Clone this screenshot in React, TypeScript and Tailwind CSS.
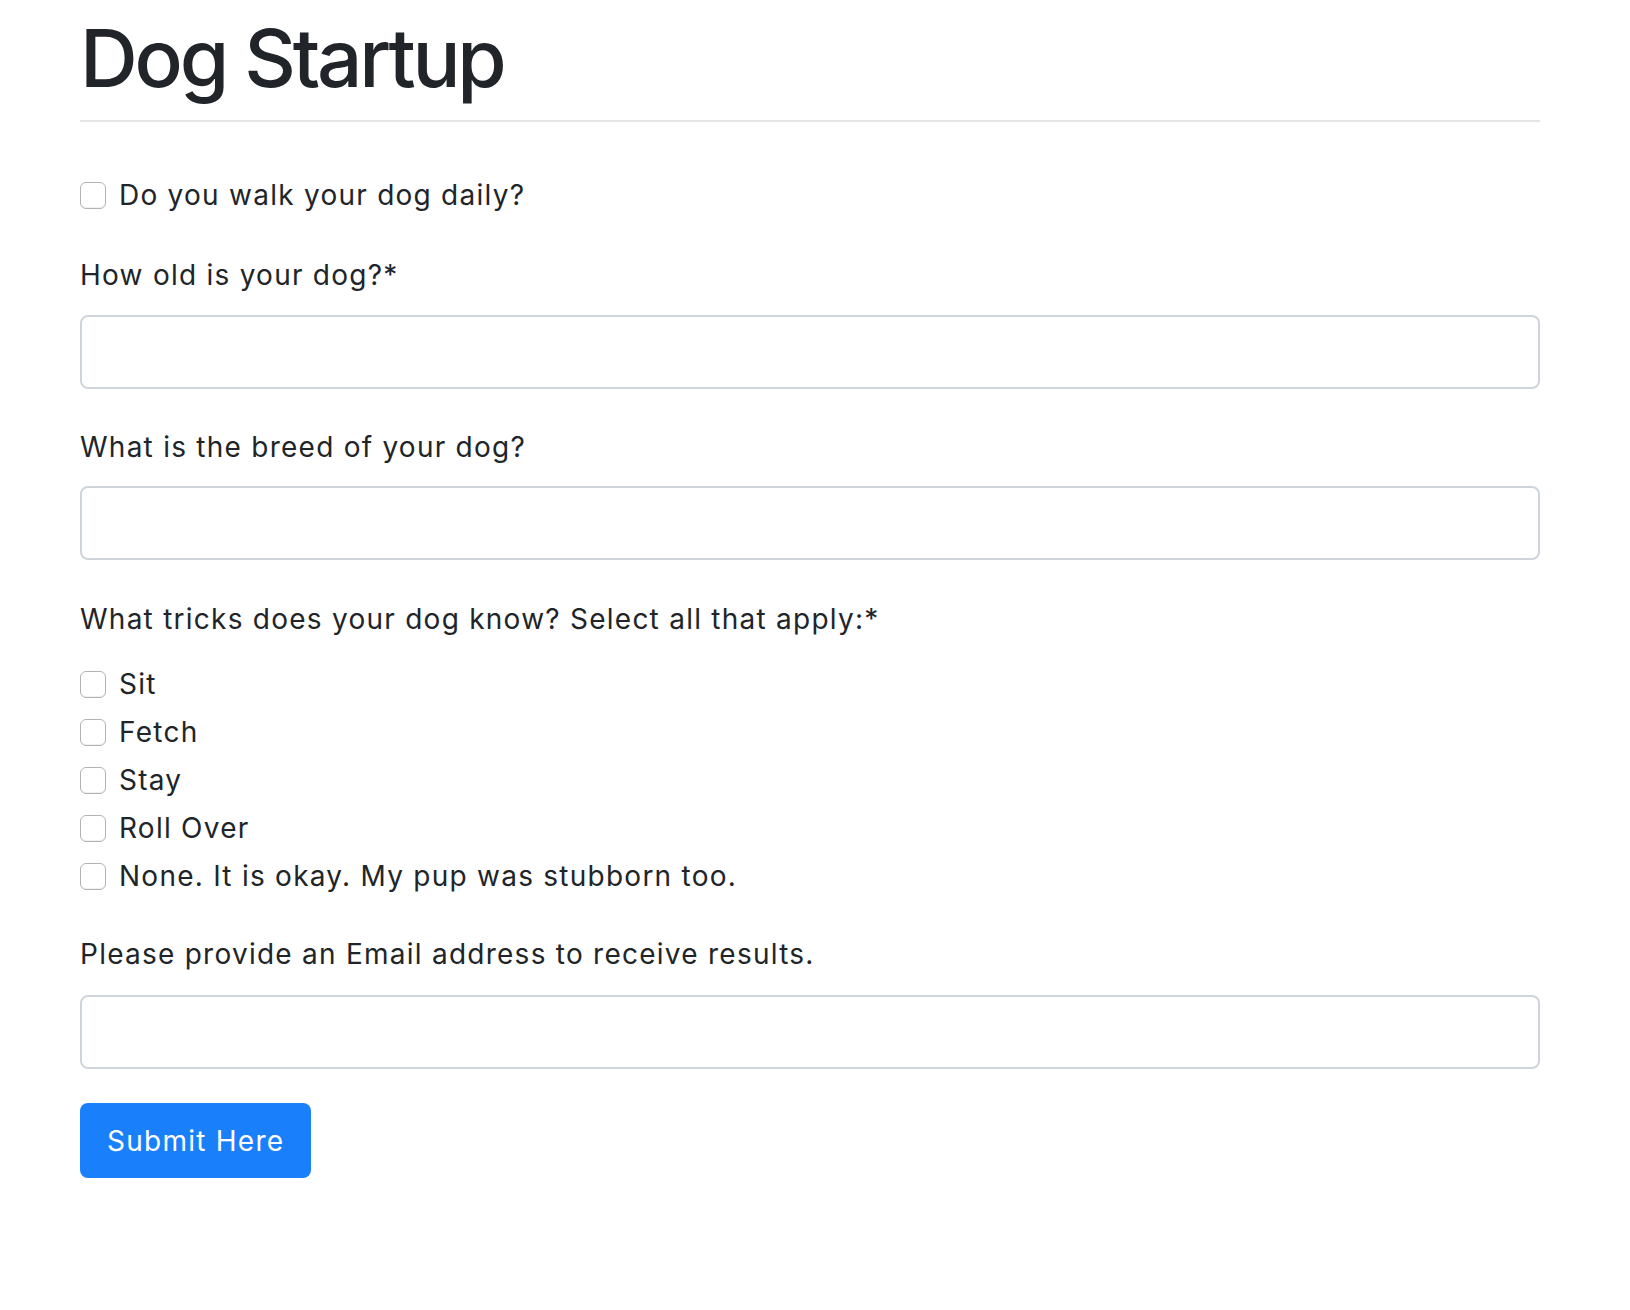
import React from "react";

const tricks = ["Sit", "Fetch", "Stay", "Roll Over", "None. It is okay. My pup was stubborn too."];

const Check = ({ label, rowClass }: { label: string; rowClass: string }) => {
    return (
        <label className={`flex items-center ${rowClass}`}>
            <input
                type="checkbox"
                className="appearance-none w-[26px] h-[27px] shrink-0 rounded-[6px] border border-[#b3b3b3] bg-white shadow-[inset_0_-1px_0_rgba(0,0,0,0.06)]"
            />
            <span className="ml-[13px]">{label}</span>
        </label>
    );
};

const App = () => {
    return (
        <div className="min-h-screen bg-white text-[#212529] font-['Inter','Liberation_Sans',sans-serif]">
            <div className="ml-[80px] w-[1460px] pt-[10px]">
                <h1 className="text-[80px] leading-[96px] font-medium tracking-[-0.04em]">Dog Startup</h1>
                <hr className="mt-[14px] border-0 border-t-2 border-[#e5e5e5]" />

                <form className="text-[28px] leading-[42px] tracking-[1.25px]">
                    <div className="mt-[52px]">
                        <Check label="Do you walk your dog daily?" rowClass="h-[42px]" />
                    </div>

                    {/* age */}
                    <div className="mt-[38px]">
                        <p>How old is your dog?*</p>
                        <input type="text" className="mt-[19px] block w-full h-[74px] rounded-[8px] border-2 border-[#ced4da] px-[24px]" />
                    </div>

                    {/* breed */}
                    <div className="mt-[37px]">
                        <p>What is the breed of your dog?</p>
                        <input type="text" className="mt-[18px] block w-full h-[74px] rounded-[8px] border-2 border-[#ced4da] px-[24px]" />
                    </div>

                    {/* tricks */}
                    <div className="mt-[38px]">
                        <p>What tricks does your dog know? Select all that apply:*</p>
                        <div className="mt-[20px] flex flex-col">
                            {tricks.map((t) => (
                                <Check key={t} label={t} rowClass="h-[48px]" />
                            ))}
                        </div>
                    </div>

                    {/* email */}
                    <div className="mt-[33px]">
                        <p>Please provide an Email address to receive results.</p>
                        <input type="email" className="mt-[20px] block w-full h-[74px] rounded-[8px] border-2 border-[#ced4da] px-[24px]" />
                    </div>

                    <button type="submit" className="mt-[34px] h-[75px] px-[27px] rounded-[8px] bg-[#1a7ffa] text-white">
                        Submit Here
                    </button>
                </form>
            </div>
        </div>
    );
};

export default App;
